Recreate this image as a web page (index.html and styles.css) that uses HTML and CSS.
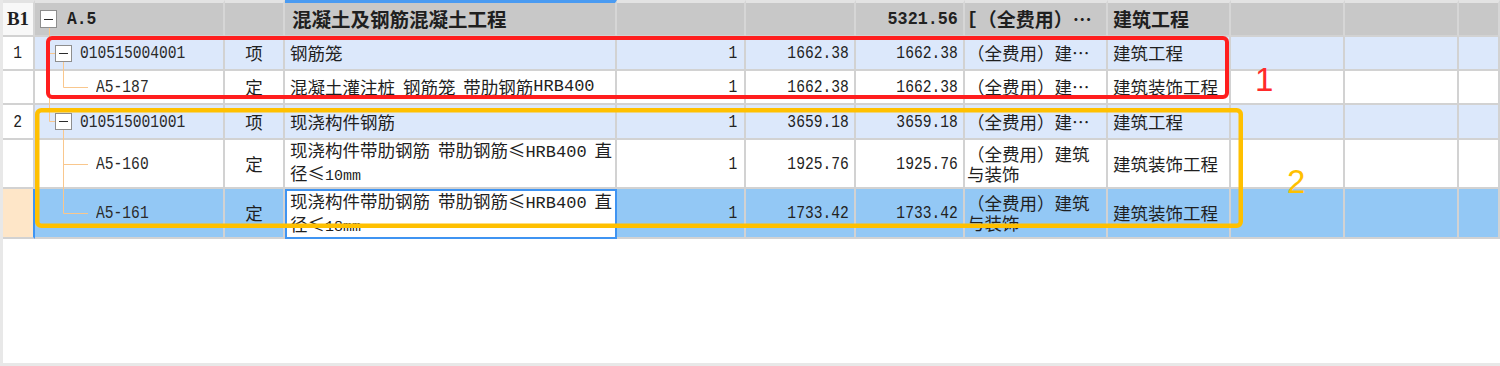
FILE: index.html
```html
<!DOCTYPE html>
<html lang="zh-CN">
<head>
<meta charset="utf-8">
<title>混凝土及钢筋混凝土工程</title>
<link rel="stylesheet" href="styles.css">
</head>
<body>
<div class="panel">
  <div class="row head">
    <div class="c rn b1">B1</div>
    <div class="c code lvl0"><span class="box"></span><span class="acode">A.5</span></div>
    <div class="c unit"></div>
    <div class="c txt name">混凝土及钢筋混凝土工程</div>
    <div class="c num"></div>
    <div class="c num"></div>
    <div class="c num"><span class="n bn">5321.56</span></div>
    <div class="c txt fee"><span class="brk">[</span>（全费用）…</div>
    <div class="c txt">建筑工程</div>
    <div class="c"></div>
    <div class="c"></div>
    <div class="c"></div>
  </div>

  <div class="row r34 blue">
    <div class="c rn"><span class="n">1</span></div>
    <div class="c code lvl1"><span class="box"></span><span class="cd">010515004001</span></div>
    <div class="c unit">项</div>
    <div class="c txt name">钢筋笼</div>
    <div class="c num qty"><span class="n">1</span></div>
    <div class="c num"><span class="n">1662.38</span></div>
    <div class="c num"><span class="n">1662.38</span></div>
    <div class="c txt fee">（全费用）建…</div>
    <div class="c txt">建筑工程</div>
    <div class="c"></div>
    <div class="c"></div>
    <div class="c"></div>
  </div>

  <div class="row r34">
    <div class="c rn"></div>
    <div class="c code lvl2"><span class="cd">A5-187</span></div>
    <div class="c unit">定</div>
    <div class="c txt name">混凝土灌注桩 钢筋笼 带肋钢筋<span class="hrb">HRB400</span></div>
    <div class="c num qty"><span class="n">1</span></div>
    <div class="c num"><span class="n">1662.38</span></div>
    <div class="c num"><span class="n">1662.38</span></div>
    <div class="c txt fee">（全费用）建…</div>
    <div class="c txt">建筑装饰工程</div>
    <div class="c"></div>
    <div class="c"></div>
    <div class="c"></div>
  </div>

  <div class="row r35 blue">
    <div class="c rn"><span class="n">2</span></div>
    <div class="c code lvl1"><span class="box"></span><span class="cd">010515001001</span></div>
    <div class="c unit">项</div>
    <div class="c txt name">现浇构件钢筋</div>
    <div class="c num qty"><span class="n">1</span></div>
    <div class="c num"><span class="n">3659.18</span></div>
    <div class="c num"><span class="n">3659.18</span></div>
    <div class="c txt fee">（全费用）建…</div>
    <div class="c txt">建筑工程</div>
    <div class="c"></div>
    <div class="c"></div>
    <div class="c"></div>
  </div>

  <div class="row r49">
    <div class="c rn"></div>
    <div class="c code lvl2"><span class="cd">A5-160</span></div>
    <div class="c unit">定</div>
    <div class="c txt name"><span class="lines">现浇构件带肋钢筋 带肋钢筋≤<span class="hrb">HRB400</span> 直<br>径≤<span class="mm">10mm</span></span></div>
    <div class="c num qty"><span class="n">1</span></div>
    <div class="c num"><span class="n">1925.76</span></div>
    <div class="c num"><span class="n">1925.76</span></div>
    <div class="c txt fee"><span class="lines">（全费用）建筑<br>与装饰</span></div>
    <div class="c txt">建筑装饰工程</div>
    <div class="c"></div>
    <div class="c"></div>
    <div class="c"></div>
  </div>

  <div class="row r50 sel">
    <div class="c rn cur"></div>
    <div class="c code lvl2"><span class="cd">A5-161</span></div>
    <div class="c unit">定</div>
    <div class="c txt name edit"><span class="lines">现浇构件带肋钢筋 带肋钢筋≤<span class="hrb">HRB400</span> 直<br>径≤<span class="mm">18mm</span></span></div>
    <div class="c num qty"><span class="n">1</span></div>
    <div class="c num"><span class="n">1733.42</span></div>
    <div class="c num"><span class="n">1733.42</span></div>
    <div class="c txt fee"><span class="lines">（全费用）建筑<br>与装饰</span></div>
    <div class="c txt">建筑装饰工程</div>
    <div class="c"></div>
    <div class="c"></div>
    <div class="c"></div>
  </div>

  <svg class="overlay" width="1500" height="366" viewBox="0 0 1500 366" aria-hidden="true">
    <g stroke="#f9c78d" stroke-width="1" fill="none">
      <path d="M49.5 28 V121.5 H55"/>
      <path d="M49.5 53.5 H55"/>
      <path d="M63.5 62 V87.5 H88"/>
      <path d="M63.5 130 V213.5 H88"/>
      <path d="M63.5 164.5 H88"/>
    </g>
    <rect x="48" y="38" width="1179" height="59" rx="4" fill="none" stroke="#ff1e1e" stroke-width="4"/>
    <rect x="37.25" y="110.25" width="1203.5" height="115.5" rx="4" fill="none" stroke="#ffc000" stroke-width="4.5"/>
  </svg>
  <div class="tag tag1">1</div>
  <div class="tag tag2">2</div>
</div>
</body>
</html>
```

FILE: styles.css
```css
html, body {
  margin: 0;
  padding: 0;
}
body {
  width: 1500px;
  height: 366px;
  overflow: hidden;
  background: #e8e8e8;
  color: #1f1f1f;
  font-family: "Noto Sans CJK SC", "Liberation Sans", sans-serif;
}
.panel {
  position: relative;
  margin-left: 3px;
  width: 1497px;
  height: 363px;
  background: #ffffff;
}
.row {
  display: grid;
  grid-template-columns: 32px 190px 60px 332px 129px 110px 109px 143px 123px 114px 114px 1fr;
  background: #ffffff;
}
.head { height: 37px; }
.r34 { height: 34px; }
.r35 { height: 35px; }
.r49 { height: 49px; }
.r50 { height: 50px; }

.c {
  box-sizing: border-box;
  border-right: 2px solid #d2d2d2;
  border-bottom: 2px solid #d2d2d2;
  display: flex;
  align-items: center;
  overflow: hidden;
  white-space: nowrap;
  font-size: 17.5px;
  line-height: 20px;
}
.blue .c { background: #dce8fb; }
.sel .c { background: #93c8f5; }

.head .c {
  background: #c8c8c8;
  border-top: 3px solid #e3e3e3;
  border-right-color: #d6d6d6;
  font-weight: bold;
  font-size: 19px;
}
.head .c.name {
  border-top-color: #4a9bf2;
  font-size: 19.5px;
  padding-left: 7px;
}
.head .c.b1 {
  background: #f8f8f8;
  font-family: "Liberation Serif", serif;
  font-size: 19px;
}

.rn {
  justify-content: center;
  background: #ffffff;
}
.blue .c.rn { background: #ffffff; }
.sel .c.rn.cur {
  background: #fee6c8;
  border-right-color: #3f94f2;
}

/* narrow tall digits, like the grid's bitmap font */
.n, .cd {
  display: inline-block;
  font-family: "Liberation Mono", monospace;
  font-size: 19px;
  font-weight: normal;
  transform: scaleX(0.77);
  transform-origin: right center;
  color: #222222;
}
.rn .n { transform-origin: center center; }
.cd { transform-origin: left center; color: #2a2a2a; }
.n.bn {
  font-weight: bold;
  transform: scaleX(0.88);
}

.code { padding-left: 20px; }
.code.lvl0 { padding-left: 5px; }
.code.lvl2 { padding-left: 61px; }
.box {
  box-sizing: border-box;
  width: 17px;
  height: 17px;
  border: 1px solid #8e8e8e;
  background: #ffffff;
  margin-right: 8px;
  display: flex;
  align-items: center;
  justify-content: center;
  flex: none;
}
.box::before {
  content: "";
  width: 9px;
  height: 1px;
  background: #2a2a2a;
}
.lvl0 .box { margin-right: 10px; height: 18px; }
.acode {
  display: inline-block;
  font-family: "Liberation Mono", monospace;
  font-size: 19px;
  font-weight: bold;
  transform: scaleX(0.86);
  transform-origin: left center;
}

.unit { justify-content: center; }
.txt { padding-left: 5px; }
.name { word-spacing: 4px; }
.hrb {
  font-family: "Liberation Mono", monospace;
  font-size: 17px;
  word-spacing: 0;
}
.mm {
  font-family: "Liberation Mono", monospace;
  font-size: 15px;
}
.lines { display: block; }

.num {
  justify-content: flex-end;
  padding-right: 5px;
}
.num.qty { padding-right: 7px; }
.fee { padding-left: 2px; }
.brk {
  font-family: "Liberation Mono", monospace;
  font-size: 18px;
}

.sel .c.edit {
  background: #ffffff;
  border: 2px solid #3f94f2;
  padding-left: 3px;
}

.overlay {
  position: absolute;
  left: -3px;
  top: 0;
  pointer-events: none;
}
.tag {
  position: absolute;
  font-family: "Liberation Sans", sans-serif;
  font-size: 33px;
  line-height: 33px;
}
.tag1 {
  left: 1252px;
  top: 63px;
  color: #ff2a2a;
}
.tag2 {
  left: 1284px;
  top: 165px;
  color: #ffc000;
}
```
